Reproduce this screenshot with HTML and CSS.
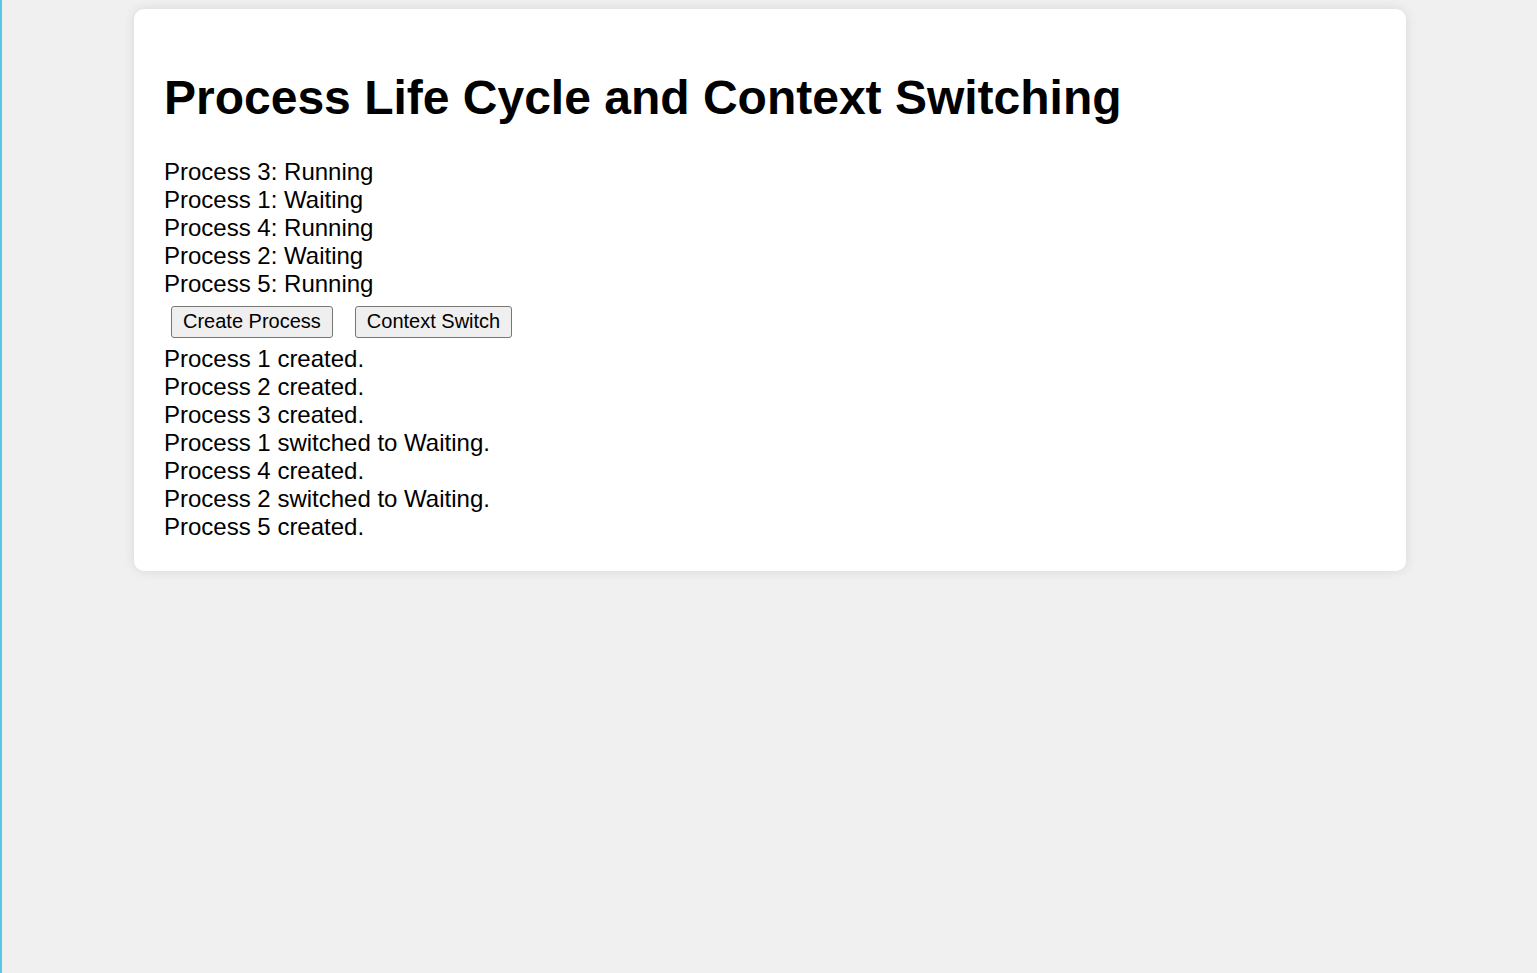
FILE: index.html
```html
<!DOCTYPE html>
<html lang="en">
<head>
<meta charset="utf-8">
<title>Process Life Cycle and Context Switching</title>
<link rel="stylesheet" href="styles.css">
</head>
<body>
  <main class="card">
    <h1 class="title">Process Life Cycle and Context Switching</h1>
    <div class="states">
      <div class="line">Process 3: Running</div>
      <div class="line">Process 1: Waiting</div>
      <div class="line">Process 4: Running</div>
      <div class="line">Process 2: Waiting</div>
      <div class="line">Process 5: Running</div>
    </div>
    <div class="actions">
      <button class="btn">Create Process</button>
      <button class="btn">Context Switch</button>
    </div>
    <div class="log">
      <div class="line">Process 1 created.</div>
      <div class="line">Process 2 created.</div>
      <div class="line">Process 3 created.</div>
      <div class="line">Process 1 switched to Waiting.</div>
      <div class="line">Process 4 created.</div>
      <div class="line">Process 2 switched to Waiting.</div>
      <div class="line">Process 5 created.</div>
    </div>
  </main>
</body>
</html>
```
FILE: styles.css
```css
html {
  border-left: 2px solid #5cc6e8;
  min-height: 100%;
  background: #f0f0f0;
}
body {
  margin: 0;
  padding: 9px 0 20px 132px;
  background: #f0f0f0;
  font-family: "Liberation Sans", Arial, sans-serif;
  font-size: 24px;
  color: #000;
}
.card {
  width: 1212px;
  background: #fff;
  border-radius: 10px;
  padding: 27px 30px 30px 30px;
  box-shadow: 0 0 12px rgba(0, 0, 0, 0.1);
}
.title {
  margin: 34px 0 33px 0;
  font-size: 48px;
  font-weight: bold;
  line-height: 55px;
}
.line {
  line-height: 28px;
  height: 28px;
}
.actions {
  display: flex;
  gap: 22px;
  margin: 8px 0 7px 7px;
}
.btn {
  font-family: "Liberation Sans", Arial, sans-serif;
  font-size: 20px;
  line-height: 22px;
  padding: 3px 11px 5px 11px;
  color: #000;
  background: #efefef;
  border: 1px solid #767676;
  border-radius: 3px;
}
```
